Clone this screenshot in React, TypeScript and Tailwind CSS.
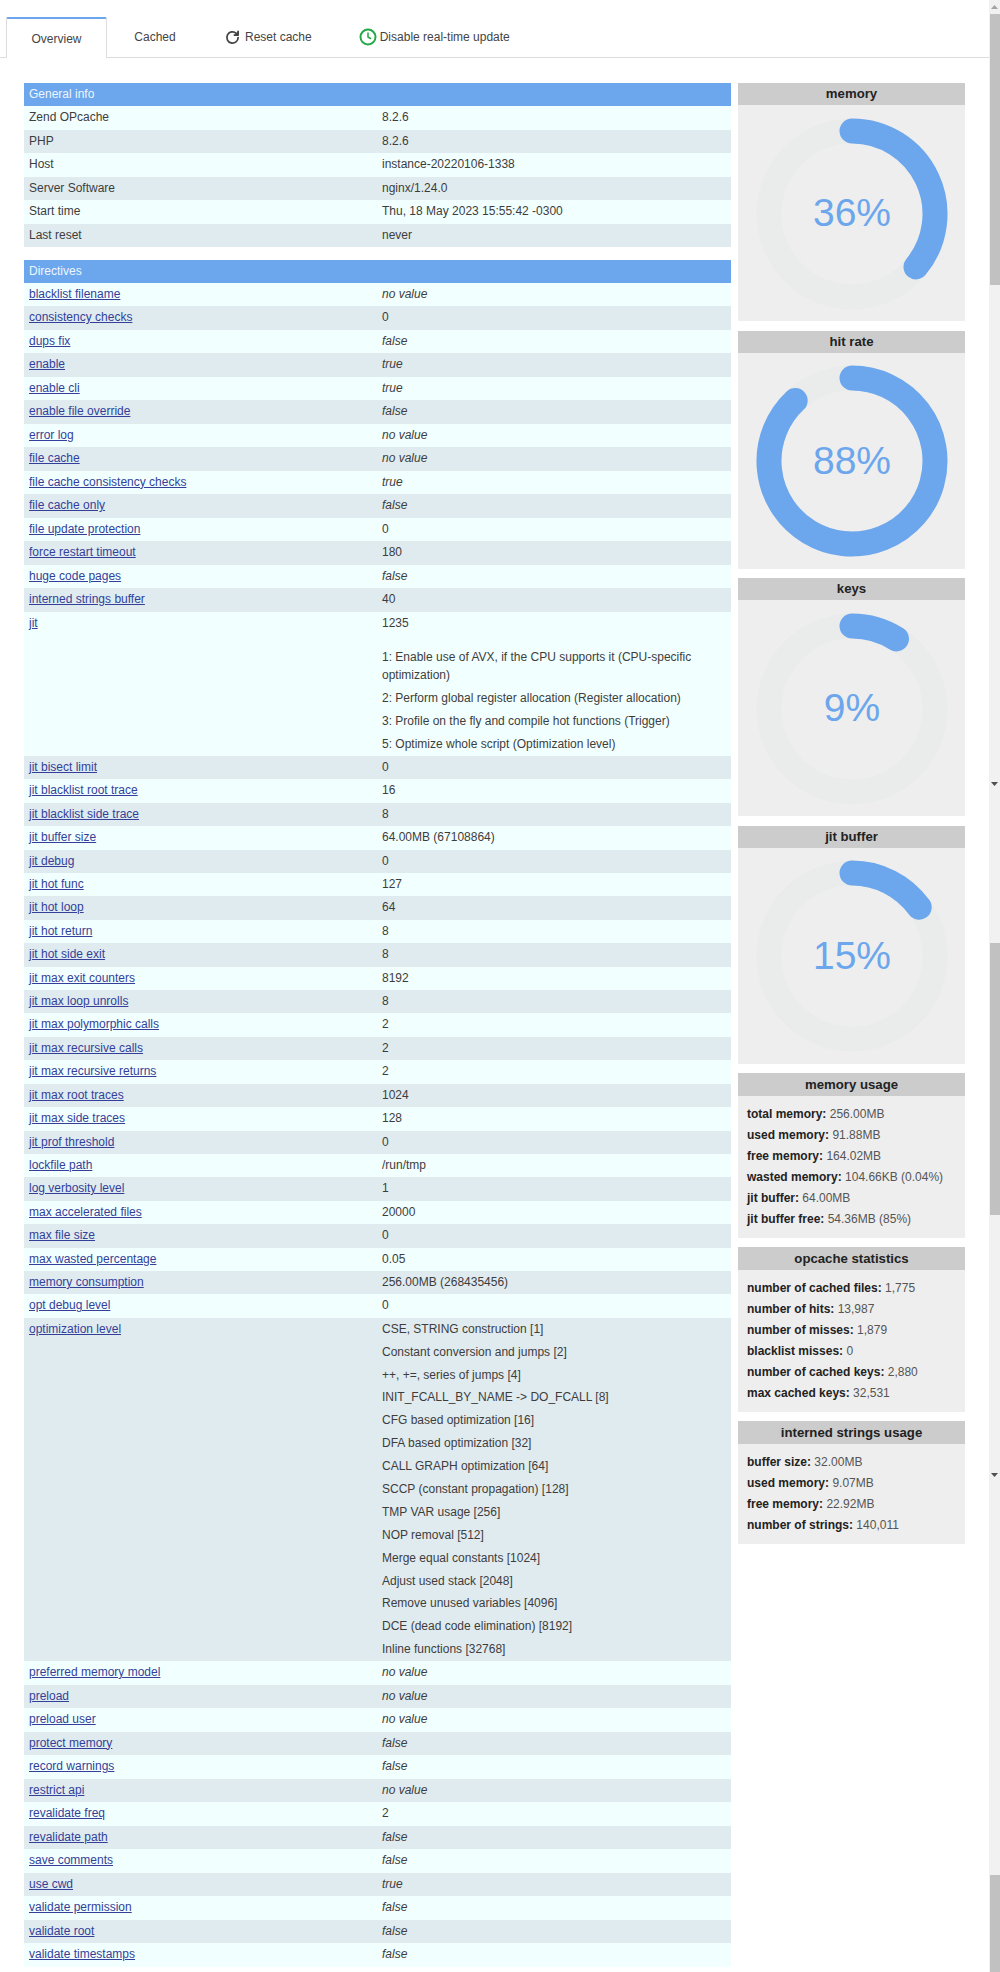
import React from "react";

const generalInfo = [
  ["Zend OPcache", "8.2.6"],
  ["PHP", "8.2.6"],
  ["Host", "instance-20220106-1338"],
  ["Server Software", "nginx/1.24.0"],
  ["Start time", "Thu, 18 May 2023 15:55:42 -0300"],
  ["Last reset", "never"],
];

const directives: [string, string | string[]][] = [
  ["blacklist filename", "no value"],
  ["consistency checks", "0"],
  ["dups fix", "false"],
  ["enable", "true"],
  ["enable cli", "true"],
  ["enable file override", "false"],
  ["error log", "no value"],
  ["file cache", "no value"],
  ["file cache consistency checks", "true"],
  ["file cache only", "false"],
  ["file update protection", "0"],
  ["force restart timeout", "180"],
  ["huge code pages", "false"],
  ["interned strings buffer", "40"],
  ["jit", "JIT"],
  ["jit bisect limit", "0"],
  ["jit blacklist root trace", "16"],
  ["jit blacklist side trace", "8"],
  ["jit buffer size", "64.00MB (67108864)"],
  ["jit debug", "0"],
  ["jit hot func", "127"],
  ["jit hot loop", "64"],
  ["jit hot return", "8"],
  ["jit hot side exit", "8"],
  ["jit max exit counters", "8192"],
  ["jit max loop unrolls", "8"],
  ["jit max polymorphic calls", "2"],
  ["jit max recursive calls", "2"],
  ["jit max recursive returns", "2"],
  ["jit max root traces", "1024"],
  ["jit max side traces", "128"],
  ["jit prof threshold", "0"],
  ["lockfile path", "/run/tmp"],
  ["log verbosity level", "1"],
  ["max accelerated files", "20000"],
  ["max file size", "0"],
  ["max wasted percentage", "0.05"],
  ["memory consumption", "256.00MB (268435456)"],
  ["opt debug level", "0"],
  [
    "optimization level",
    [
      "CSE, STRING construction [1]",
      "Constant conversion and jumps [2]",
      "++, +=, series of jumps [4]",
      "INIT_FCALL_BY_NAME -> DO_FCALL [8]",
      "CFG based optimization [16]",
      "DFA based optimization [32]",
      "CALL GRAPH optimization [64]",
      "SCCP (constant propagation) [128]",
      "TMP VAR usage [256]",
      "NOP removal [512]",
      "Merge equal constants [1024]",
      "Adjust used stack [2048]",
      "Remove unused variables [4096]",
      "DCE (dead code elimination) [8192]",
      "Inline functions [32768]",
    ],
  ],
  ["preferred memory model", "no value"],
  ["preload", "no value"],
  ["preload user", "no value"],
  ["protect memory", "false"],
  ["record warnings", "false"],
  ["restrict api", "no value"],
  ["revalidate freq", "2"],
  ["revalidate path", "false"],
  ["save comments", "false"],
  ["use cwd", "true"],
  ["validate permission", "false"],
  ["validate root", "false"],
  ["validate timestamps", "false"],
];

const gauges = [
  ["memory", 36],
  ["hit rate", 88],
  ["keys", 9],
  ["jit buffer", 15],
] as [string, number][];

const stats: [string, [string, string][]][] = [
  [
    "memory usage",
    [
      ["total memory", "256.00MB"],
      ["used memory", "91.88MB"],
      ["free memory", "164.02MB"],
      ["wasted memory", "104.66KB (0.04%)"],
      ["jit buffer", "64.00MB"],
      ["jit buffer free", "54.36MB (85%)"],
    ],
  ],
  [
    "opcache statistics",
    [
      ["number of cached files", "1,775"],
      ["number of hits", "13,987"],
      ["number of misses", "1,879"],
      ["blacklist misses", "0"],
      ["number of cached keys", "2,880"],
      ["max cached keys", "32,531"],
    ],
  ],
  [
    "interned strings usage",
    [
      ["buffer size", "32.00MB"],
      ["used memory", "9.07MB"],
      ["free memory", "22.92MB"],
      ["number of strings", "140,011"],
    ],
  ],
];

function Gauge({ title, value }: { title: string; value: number }) {
  const r = 83;
  const c = 96;
  const angle = (value / 100) * 2 * Math.PI;
  const x = c + r * Math.sin(angle);
  const y = c - r * Math.cos(angle);
  return (
    <div className="bg-[#eeeeee]">
      <div className="flex h-[22px] items-center justify-center bg-[#cccccc] text-[13.2px] font-bold text-[#222222]">
        {title}
      </div>
      <div className="relative flex h-[216px] items-center justify-center pl-[1px] pt-[1px]">
        <svg width="192" height="192" viewBox="0 0 192 192" fill="none">
          <circle cx={c} cy={c} r={r} stroke="#eaebeb" strokeWidth="25" />
          <path
            d={`M ${c} ${c - r} A ${r} ${r} 0 ${value > 50 ? 1 : 0} 1 ${x} ${y}`}
            stroke="#6ca6ec"
            strokeWidth="25"
            strokeLinecap="round"
          />
        </svg>
        <span className="absolute inset-0 flex items-center justify-center pl-[1px] pt-[1px] text-[39px] text-[#6ca6ec]">
          {value}%
        </span>
      </div>
    </div>
  );
}

function StatBox({ title, rows }: { title: string; rows: [string, string][] }) {
  return (
    <div className="bg-[#eeeeee]">
      <div className="flex h-[23px] items-center justify-center bg-[#cccccc] text-[13.2px] font-bold text-[#222222]">
        {title}
      </div>
      <div className="px-[9px] pb-[7.5px] pt-[8px]">
        {rows.map(([k, v]) => (
          <div key={k} className="h-[21px] text-[12px] leading-[21px] text-[#555555]">
            <b className="text-[#222222]">{k}:</b> {v}
          </div>
        ))}
      </div>
    </div>
  );
}

function Value({ value }: { value: string | string[] }) {
  if (value === "JIT") {
    return (
      <div>
        <p className="h-[23.5px] leading-[23.5px]">1235</p>
        <div className="pt-[14px]">
          <p className="pb-[3px] leading-[17.5px]">1: Enable use of AVX, if the CPU supports it (CPU-specific optimization)</p>
          <p className="h-[23px] leading-[23px]">2: Perform global register allocation (Register allocation)</p>
          <p className="h-[23px] leading-[23px]">3: Profile on the fly and compile hot functions (Trigger)</p>
          <p className="h-[23px] leading-[23px]">5: Optimize whole script (Optimization level)</p>
        </div>
      </div>
    );
  }
  if (Array.isArray(value)) {
    return (
      <div>
        {value.map((line) => (
          <p key={line} className="h-[22.9px] leading-[22.9px]">
            {line}
          </p>
        ))}
      </div>
    );
  }
  const italic = value === "no value" || value === "false" || value === "true";
  return <span className={italic ? "italic" : ""}>{value}</span>;
}

function TableRow({
  index,
  label,
  link,
  compact,
  value,
}: {
  index: number;
  label: string;
  link?: boolean;
  compact?: boolean;
  value: string | string[];
}) {
  return (
    <div
      className={`grid grid-cols-[354px_1fr] ${compact ? "min-h-[23.4px] leading-[23.4px]" : "min-h-[23.5px] leading-[23.5px]"} ${
        index % 2 === 0 ? "bg-[#f2ffff]" : "bg-[#e0ebf0]"
      }`}
    >
      <div className="pl-[5px]">
        {link ? (
          <a href="#" className="text-[#333f99] underline">
            {label}
          </a>
        ) : (
          label
        )}
      </div>
      <div className="pl-[4px] pr-[20px]">
        <Value value={value} />
      </div>
    </div>
  );
}

function ScrollArrow({ up }: { up?: boolean }) {
  return (
    <svg width="7" height="4" viewBox="0 0 7 4" className="mx-auto">
      <path d={up ? "M3.5 0 7 4H0z" : "M0 0h7L3.5 4z"} fill={up ? "#a3a3a3" : "#505050"} />
    </svg>
  );
}

export default function App() {
  return (
    <div
      className="flex h-[1972px] w-[1000px] overflow-hidden bg-white text-[12px] text-[#3d3d3d]"
      style={{ fontFamily: '"Liberation Sans", Arial, sans-serif' }}
    >
      <div className="w-[989px] shrink-0">
        <nav className="flex h-[58px] items-end border-b border-[#dddddd] pl-[6px] text-[12px] text-[#444444]">
          <div className="-mb-px flex h-[41px] w-[101px] items-center justify-center rounded-t-[2px] border-x border-t-2 border-x-[#dddddd] border-t-[#6ca6ec] bg-white">
            Overview
          </div>
          <div className="flex h-[40px] w-[96px] items-center justify-center">Cached</div>
          <div className="ml-[22px] flex h-[40px] items-center gap-[5px]">
            <svg width="15" height="15" viewBox="0 0 24 24" fill="none" stroke="#444444" strokeWidth="2.8" strokeLinecap="round" strokeLinejoin="round">
              <path d="M21 12a9 9 0 1 1-3-6.7" />
              <path d="M21 2v6h-6" fill="#444444" />
            </svg>
            Reset cache
          </div>
          <div className="ml-[47px] flex h-[40px] items-center gap-[3px]">
            <svg width="18" height="18" viewBox="0 0 24 24" fill="none" stroke="#22a845" strokeWidth="2.6" strokeLinecap="round" strokeLinejoin="round">
              <circle cx="12" cy="12" r="10" />
              <path d="M12 6.5V12l3.5 2" strokeWidth="2" />
            </svg>
            Disable real-time update
          </div>
        </nav>
        <main className="flex gap-[7px] pl-[24px] pt-[25px]">
          <div className="w-[707px] shrink-0">
            <div className="h-[23px] bg-[#6ca6ec] pl-[5px] leading-[23px] text-[#eef6ff]">General info</div>
            {generalInfo.map(([k, v], i) => (
              <TableRow key={k} index={i} label={k} value={v} />
            ))}
            <div className="mt-[12.5px] h-[23px] bg-[#6ca6ec] pl-[5px] leading-[23px] text-[#eef6ff]">Directives</div>
            {directives.map(([k, v], i) => (
              <TableRow key={k} index={i} label={k} link compact={i > 14 && i < 39} value={v} />
            ))}
          </div>
          <aside className="flex w-[227px] shrink-0 flex-col gap-[9.5px]">
            {gauges.map(([t, v]) => (
              <Gauge key={t} title={t} value={v} />
            ))}
            {stats.map(([t, rows]) => (
              <StatBox key={t} title={t} rows={rows} />
            ))}
          </aside>
        </main>
      </div>
      <div className="flex w-[11px] shrink-0 flex-col bg-[#f1f1f1]">
        <div className="flex h-[14px] items-center">
          <ScrollArrow up />
        </div>
        <div className="ml-[1px] h-[271px] bg-[#c1c1c1]" />
        <div className="flex h-[658px] items-end pb-[157px]">
          <ScrollArrow />
        </div>
        <div className="ml-[1px] h-[272px] bg-[#c1c1c1]" />
        <div className="flex h-[660px] items-end pb-[398px]">
          <ScrollArrow />
        </div>
        <div className="ml-[1px] h-[97px] bg-[#c1c1c1]" />
      </div>
    </div>
  );
}
